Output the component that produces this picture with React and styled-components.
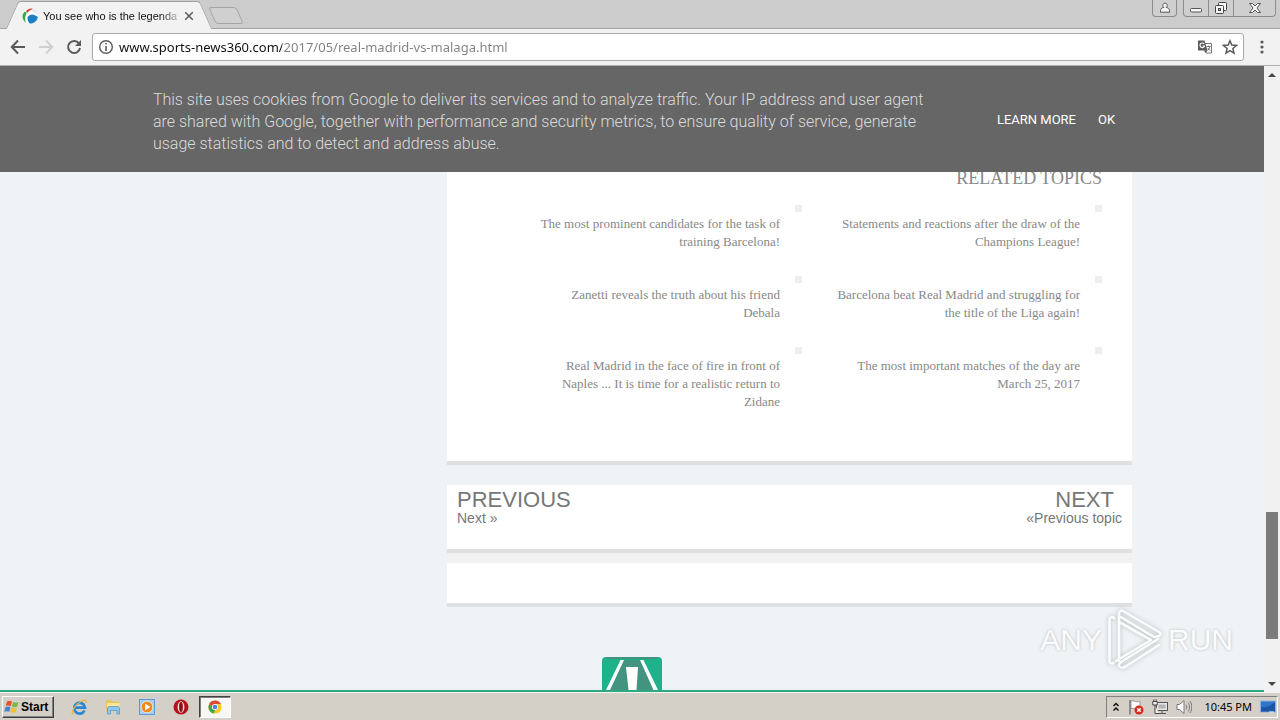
import React from 'react';
import styled, { createGlobalStyle } from 'styled-components';

const GlobalStyle = createGlobalStyle`
  * { box-sizing: border-box; }
  body { margin: 0; background: #eff3f6; }
  button { font: inherit; color: inherit; background: none; border: 0; padding: 0; }
  a { color: inherit; text-decoration: none; }
  svg { display: block; flex: none; }
`;

const Shell = styled.div`
  display: flex;
  flex-direction: column;
  min-height: 100vh;
  font-family: 'Noto Sans', sans-serif;
`;

/* ---------- browser chrome ---------- */
const TitleBar = styled.div`
  display: flex;
  height: 29px;
  padding-left: 12px;
  background: #cccccc;
  border-bottom: 1px solid #a5a5a5;
`;

const Tab = styled.div`
  position: relative;
  display: flex;
  align-items: center;
  gap: 5px;
  width: 194px;
  height: 29px;
  padding: 2px 12px 0 10px;
  &::before, &::after {
    content: '';
    position: absolute;
    top: 1px;
    bottom: 0;
    background: #f2f2f2;
    border-top: 1px solid #a0a0a0;
  }
  &::before {
    left: 0;
    right: 50%;
    border-left: 1px solid #a0a0a0;
    border-top-left-radius: 3px;
    transform: skewX(-24deg);
  }
  &::after {
    left: 40%;
    right: 0;
    border-right: 1px solid #a0a0a0;
    border-top-right-radius: 3px;
    transform: skewX(24deg);
  }
  & > * { position: relative; z-index: 1; }
`;

const TabTitle = styled.span`
  flex: 1;
  white-space: nowrap;
  font: 11px/16px 'Liberation Sans', sans-serif;
  color: #111;
  mask-image: linear-gradient(90deg, #000 86%, rgba(0, 0, 0, 0.2));
`;

const NewTab = styled.button`
  width: 28px;
  height: 17px;
  margin: 7px 0 0 6px;
  border: 1px solid #a5a5a5;
  border-radius: 3px;
  background: #d0d0d0;
  transform: skewX(24deg);
`;

const WindowControls = styled.div`
  display: flex;
  margin-left: auto;
  padding-right: 4px;
`;

const WindowButton = styled.button`
  display: flex;
  align-items: center;
  justify-content: center;
  width: ${p => p.$width}px;
  height: 17px;
  margin-right: ${p => p.$gap || 0}px;
  border: 1px solid #8c8c8c;
  border-top: 0;
  border-left-width: ${p => (p.$joined ? 0 : 1)}px;
  border-radius: ${p => p.$radius || 0};
  background: #cfcfcf;
`;

const Toolbar = styled.div`
  display: flex;
  align-items: center;
  gap: 8px;
  height: 37px;
  padding: 0 8px;
  background: #f2f2f2;
  border-bottom: 1px solid #b0b0b0;
`;

const IconButton = styled.button`
  display: flex;
  align-items: center;
  justify-content: center;
  width: 20px;
  height: 20px;
`;

const AddressBar = styled.div`
  display: flex;
  align-items: center;
  flex: 1;
  gap: 5px;
  height: 28px;
  padding: 0 3px 0 5px;
  background: #fff;
  border: 1px solid #a9a9a9;
  border-radius: 3px;
`;

const AddressInput = styled.input`
  flex: 1;
  min-width: 0;
  border: 0;
  outline: 0;
  padding: 0;
  font: 13px/20px 'Noto Sans', sans-serif;
  color: #222;
  background: linear-gradient(90deg, #111 163px, #808080 163px);
  background-clip: text;
  -webkit-text-fill-color: transparent;
`;

/* ---------- web page ---------- */
const Viewport = styled.div`
  display: flex;
  flex: 1;
`;

const Page = styled.div`
  position: relative;
  display: flex;
  flex-direction: column;
  flex: 1;
  min-width: 0;
  background: #eff3f6;
`;

const CookieBanner = styled.section`
  position: relative;
  z-index: 1;
  display: flex;
  justify-content: center;
  align-items: center;
  height: 106px;
  padding: 6px 0 0 4px;
  background: #666;
  font-family: Roboto, sans-serif;
`;

const CookieText = styled.p`
  width: 820px;
  margin: 0;
  font-size: 16px;
  line-height: 22px;
  font-weight: 300;
  color: #dcdcdc;
`;

const CookieLinks = styled.div`
  display: flex;
  gap: 22px;
  padding: 0 0 4px 24px;
  font-size: 13px;
  line-height: 18px;
  color: #fff;
`;

const Wrapper = styled.div`
  width: 100%;
  max-width: 1000px;
  margin: 0 auto;
`;

const Column = styled.main`
  width: 685px;
  max-width: 100%;
  margin-left: auto;
`;

const Card = styled.section`
  min-height: ${p => p.$height}px;
  padding: ${p => p.$padding || 0};
  margin-bottom: ${p => p.$gap || 0}px;
  background: #fff;
  border-bottom: 4px solid #dfe0e1;
`;

const PostNav = styled.div`
  background: #f1f1f1;
`;

const RelatedTitle = styled.h2`
  margin: 0 0 21px;
  font: 18px/12px 'Liberation Serif', serif;
  text-align: right;
  color: #888;
`;

const RelatedGrid = styled.ul`
  display: grid;
  grid-template-columns: 300px 300px;
  justify-content: end;
  row-gap: 25px;
  margin: 0;
  padding: 0;
  list-style: none;
`;

const RelatedItem = styled.li`
  display: flex;
  align-items: flex-start;
  justify-content: flex-end;
  gap: 15px;
  font: 13px/18px 'Liberation Serif', serif;
  text-align: right;
  color: #888;
  a { padding-top: 10px; }
`;

const Bullet = styled.span`
  flex: none;
  width: 7px;
  height: 7px;
  background: #eeeeee;
`;

const NavRow = styled.nav`
  display: flex;
  justify-content: space-between;
  font-family: 'Liberation Sans', sans-serif;
  color: #777;
`;

const NavLink = styled.a`
  display: flex;
  flex-direction: column;
  align-items: ${p => (p.$end ? 'flex-end' : 'flex-start')};
  font-size: 14px;
  line-height: 16px;
  strong {
    padding-right: ${p => (p.$end ? 8 : 0)}px;
    font-size: 22px;
    line-height: 20px;
    font-weight: 400;
  }
`;

const PageFooter = styled.footer`
  display: flex;
  justify-content: center;
  margin-top: auto;
  border-bottom: 2px solid #2fa884;
`;

const Watermark = styled.div`
  position: absolute;
  right: 31px;
  bottom: 20px;
  display: flex;
  align-items: center;
  gap: 5px;
  font: 30px/64px 'Liberation Sans', sans-serif;
  color: #fbfcfc;
  text-shadow: 0 0 3px #b4b8ba;
  svg { filter: drop-shadow(0 0 2px #b4b8ba); }
`;

const Scrollbar = styled.div`
  display: flex;
  flex-direction: column;
  width: 16px;
  background: #f1f1f1;
`;

const ScrollButton = styled.button`
  display: flex;
  align-items: center;
  justify-content: center;
  height: 17px;
`;

const ScrollTrack = styled.div`
  display: grid;
  grid-template-rows: 429fr 127fr 36fr;
  flex: 1;
  padding: 0 2px;
`;

const ScrollThumb = styled.div`
  grid-row: 2;
  background: #7b7b7b;
`;

/* ---------- taskbar ---------- */
const Taskbar = styled.div`
  display: flex;
  align-items: center;
  height: 28px;
  padding: 1px 2px 0;
  background: #d4d0c8;
  border-top: 1px solid #f4f3f0;
`;

const StartButton = styled.button`
  display: flex;
  align-items: center;
  gap: 1px;
  width: 52px;
  height: 22px;
  margin-right: 8px;
  padding-left: 1px;
  border: 1px solid;
  border-color: #fff #404040 #404040 #fff;
  box-shadow: inset -1px -1px #808080;
  font: bold 12px/18px 'Liberation Sans', sans-serif;
  color: #000;
`;

const TaskButton = styled.button`
  display: flex;
  align-items: center;
  justify-content: center;
  width: ${p => (p.$active ? 32 : 34)}px;
  height: 22px;
  margin-left: ${p => (p.$active ? 1 : 0)}px;
  ${p => p.$active && `
    background: #f8f7f5;
    border: 1px solid;
    border-color: #404040 #fff #fff #404040;
    box-shadow: inset 1px 1px #808080;
  `}
`;

const Tray = styled.div`
  display: flex;
  align-items: center;
  gap: 8px;
  height: 22px;
  margin-left: auto;
  padding: 0 1px 0 5px;
  border: 1px solid;
  border-color: #808080 #fff #fff #808080;
`;

const Clock = styled.time`
  margin-left: 4px;
  font: 11px/16px 'Noto Sans', sans-serif;
  color: #000;
`;

/* ---------- drawings ---------- */
const Favicon = () => (
  <svg width="16" height="16" viewBox="0 0 16 16">
    <circle cx="8" cy="8" r="7.5" fill="#fff" />
    <path d="M4 3.200C6 .8 8.500 0 11 .9 9 1.400 6.500 2.800 5.200 4.800z" fill="#d33c2c" />
    <path d="M3 3.500C-.3 6 -.5 11.500 3.800 14.800c-1-3.500-.8-6.500 1-10z" fill="#3fa648" />
    <path d="M5.500 9C8 5.500 12 5.500 15.800 9c-.6 4-4 6.800-8 6.600C6 13.800 5.200 11.500 5.500 9z" fill="#1c7ec4" />
    <path d="M11 .9c2.600.9 4.400 3 4.800 5.600-1.600-1.800-3.400-2.800-5.600-3z" fill="#dfe3e6" />
  </svg>
);

const Stroke = ({ size = 16, color = '#5a5a5a', width = 2, d }) => (
  <svg width={size} height={size} viewBox="0 0 16 16" fill="none" stroke={color} strokeWidth={width}>
    <path d={d} />
  </svg>
);

const Reload = () => (
  <svg width="16" height="16" viewBox="0 0 16 16">
    <path d="M13 4.500A6 6 0 1 0 14 9" fill="none" stroke="#5a5a5a" strokeWidth="2" />
    <path d="M15 1v6H9z" fill="#5a5a5a" />
  </svg>
);

const Info = () => (
  <svg width="16" height="16" viewBox="0 0 16 16">
    <circle cx="8" cy="8" r="6.300" fill="none" stroke="#5a5a5a" strokeWidth="1.400" />
    <path d="M7.200 4h1.600v1.600H7.200zM7.200 7h1.600v5H7.200z" fill="#5a5a5a" />
  </svg>
);

const Translate = () => (
  <svg width="16" height="16" viewBox="0 0 16 16">
    <path d="M6.500 4.500h8v9.500H9" fill="#fff" stroke="#777" />
    <path d="M1 1.500h6.500l3 10H1z" fill="#5a5a5a" />
    <path d="M7.200 5A2.300 2.300 0 1 0 7.500 7H5.500" fill="none" stroke="#fff" strokeWidth="1.100" />
    <path d="M9.500 7.500h4M11.500 6.500v1M13 7.500c-.4 1.600-1.200 2.800-2.500 3.800M10.800 9l2.400 2.600" fill="none" stroke="#666" strokeWidth=".9" />
    <path d="M7 11.500h3.500L8.500 14z" fill="#444" />
  </svg>
);

const Star = () => (
  <svg width="16" height="16" viewBox="0 0 16 16">
    <path d="M8 1.800l1.800 4.300 4.700.4-3.600 3 1.100 4.600L8 11.700 4 14.100l1.100-4.600-3.600-3 4.700-.4z" fill="none" stroke="#5a5a5a" strokeWidth="1.500" />
  </svg>
);

const Dots = () => (
  <svg width="16" height="16" viewBox="0 0 16 16" fill="#5a5a5a">
    <circle cx="8" cy="3" r="1.600" /><circle cx="8" cy="8" r="1.600" /><circle cx="8" cy="13" r="1.600" />
  </svg>
);

const Person = () => (
  <svg width="12" height="12" viewBox="0 0 12 12" fill="#f4f4f4" stroke="#555">
    <path d="M6 1.200c1.300 0 2.200 1 2.200 2.200 0 .9-.4 1.600-1 2 2 .4 3.300 1.500 3.300 3v1.800h-9V8.400c0-1.500 1.300-2.600 3.300-3-.6-.4-1-1.100-1-2 0-1.200.9-2.200 2.200-2.200z" />
  </svg>
);

const Minimize = () => (
  <svg width="14" height="12" viewBox="0 0 14 12">
    <rect x="1.500" y="6.500" width="11" height="3.500" rx="1" fill="#f6f6f6" stroke="#555" />
  </svg>
);

const Restore = () => (
  <svg width="14" height="14" viewBox="0 0 14 14" fill="#f6f6f6" stroke="#444">
    <rect x="4.500" y="1.500" width="8" height="8" rx="1" />
    <rect x="1.500" y="4.500" width="8" height="8" rx="1" />
    <rect x="4.500" y="7.500" width="2" height="2" fill="#ccc" />
  </svg>
);

const CloseGlyph = () => (
  <svg width="14" height="12" viewBox="0 0 14 12">
    <path d="M1.500 1.500h3L7 4l2.500-2.500h3L9 6l3.500 4.500h-3L7 8l-2.500 2.500h-3L5 6z" fill="#f6f6f6" stroke="#555" />
  </svg>
);

const Arrow = ({ down }) => (
  <svg width="8" height="4" viewBox="0 0 8 4">
    <path d={down ? 'M0 0h8L4 4z' : 'M0 4h8L4 0z'} fill="#484848" />
  </svg>
);

const Road = () => (
  <svg width="60" height="33" viewBox="0 0 60 33">
    <path d="M0 33V4a4 4 0 0 1 4-4h52a4 4 0 0 1 4 4v29z" fill="#1eb28c" />
    <path d="M22 3h17l16 30H5z" fill="#429480" />
    <path d="M4 1h52" stroke="#429480" strokeWidth="2" />
    <path d="M18.500 3h3.500L8 33H4zM38 3h3.500L56 33h-4.500zM24 10h12l-1.500 23h-8z" fill="#fff" />
  </svg>
);

const PlayMark = () => (
  <svg width="56" height="62" viewBox="0 0 56 62" fill="none" stroke="#fbfcfc" strokeWidth="2.6" strokeLinejoin="round" strokeLinecap="round">
    <path d="M7 9C5 7 2.500 8 2.500 11v41c0 2 2 3 4 2" />
    <path d="M12 52V5c0-3 2-4 4-3l36 21c2 1 2 3 0 4l-5 1L12 7" />
    <path d="M12 13l32 18-35 21" />
    <path d="M51 30L17 51c-3 2-6 3-5 6 1 2 4 2 6 1l34-22" />
  </svg>
);

const WinFlag = () => (
  <svg width="16" height="16" viewBox="0 0 16 16">
    <path d="M3 2.500c2-1 3.500-.8 5 .1L6.800 7.200C5.200 6.400 3.700 6.300 1.800 7z" fill="#e5512b" />
    <path d="M9 3c1.800.9 3.500.9 5.500 0l-1.300 4.600c-1.800.8-3.500.7-5.300-.2z" fill="#79b648" />
    <path d="M1.500 8c1.800-.8 3.500-.7 5 .2l-1.200 4.600c-1.600-.8-3.200-.8-5 0z" fill="#3f86d0" />
    <path d="M7.600 8.500c1.700.9 3.500 1 5.300.2l-1.200 4.600c-1.900.8-3.600.7-5.300-.2z" fill="#f6bd34" />
  </svg>
);

const IeIcon = () => (
  <svg width="17" height="17" viewBox="0 0 17 17" fill="none">
    <path d="M13.500 11.500A5.400 5.400 0 1 1 14 8.700H4.500" stroke="#2b86d6" strokeWidth="2.800" />
    <path d="M2 15.500C-.5 13 4.500 5.500 10 2.500c3.500-2 6-1.600 5.300 1.300" stroke="#e9b93a" strokeWidth="1.300" />
  </svg>
);

const FolderIcon = () => (
  <svg width="16" height="16" viewBox="0 0 16 16">
    <path d="M1 1h5l1 1.500h7V12H1z" fill="#e8c45a" />
    <path d="M2 4h12.500v7H2z" fill="#f9e795" />
    <path d="M2.500 15V9.500c0-1.500 1-2 2-2h7.500c1.500 0 2.500.6 2.500 2V15H12v-3.500H5.500V15z" fill="#8cc6ee" stroke="#4c93c5" strokeWidth=".7" />
  </svg>
);

const MediaIcon = () => (
  <svg width="16" height="16" viewBox="0 0 16 16">
    <rect x=".5" y=".5" width="15" height="15" fill="#a9cdf0" stroke="#5b9bd5" />
    <circle cx="8" cy="8" r="5.800" fill="#f08a1c" stroke="#fff" strokeWidth=".6" />
    <path d="M6.200 4.800v6.400L11.500 8z" fill="#fff" />
  </svg>
);

const OperaIcon = () => (
  <svg width="16" height="16" viewBox="0 0 16 16">
    <circle cx="8" cy="8" r="7.500" fill="#b5121b" />
    <ellipse cx="8" cy="8" rx="3.400" ry="5.800" fill="#f4e4e4" />
    <ellipse cx="8" cy="8" rx="1.900" ry="5" fill="#8f0d14" />
  </svg>
);

const ChromeIcon = () => (
  <svg width="14" height="14" viewBox="0 0 16 16">
    <circle cx="8" cy="8" r="7.500" fill="#f6c927" />
    <path d="M1.500 4.200A7.500 7.500 0 0 1 14.700 4.600H8L4.900 9.500z" fill="#df4a38" />
    <path d="M1.500 4.200 4.900 9.800 8 11.500l-1.500 3.900A7.500 7.500 0 0 1 1.500 4.200z" fill="#3fa652" />
    <circle cx="8" cy="8" r="3.500" fill="#fff" />
    <circle cx="8" cy="8" r="2.700" fill="#4a86e0" />
  </svg>
);

const Chevrons = () => (
  <svg width="8" height="10" viewBox="0 0 8 10" fill="none" stroke="#111" strokeWidth="1.500">
    <path d="M1.500 4L4 1.500 6.500 4M1.500 8.500L4 6l2.500 2.500" />
  </svg>
);

const FlagIcon = () => (
  <svg width="16" height="16" viewBox="0 0 16 16">
    <path d="M2 1v14.500" stroke="#777" strokeWidth="1.500" />
    <path d="M3 2c3-1 4 1.500 9 .5v7C8 10.500 6 8.500 3 9.500z" fill="#fff" stroke="#888" strokeWidth=".8" />
    <circle cx="11" cy="11" r="4.500" fill="#d8281e" />
    <path d="M9.200 9.200l3.600 3.600M12.800 9.200l-3.600 3.600" stroke="#fff" strokeWidth="1.400" />
  </svg>
);

const NetworkIcon = () => (
  <svg width="16" height="16" viewBox="0 0 16 16">
    <rect x="4.500" y="3.500" width="11" height="8" fill="#e4e4e4" stroke="#555" />
    <rect x="6.500" y="5.500" width="7" height="4" fill="#b5b5b5" />
    <path d="M7 14.500h7M10 12v2" stroke="#555" />
    <path d="M.8 2.500h4.400V6H.8zM1.800.5v2M4.200.5v2M3 6v8.500h4" fill="#f2f2f2" stroke="#444" />
  </svg>
);

const SpeakerIcon = () => (
  <svg width="16" height="16" viewBox="0 0 16 16" fill="none" stroke="#777">
    <path d="M1 5.500h2.500L8 1.500v13l-4.500-4H1z" fill="#fff" />
    <path d="M10 5.500c1 1.500 1 3.500 0 5M12 3.500c2 2.700 2 6.300 0 9M14 2c2.300 3.500 2.300 8.500 0 12" />
  </svg>
);

const DesktopIcon = () => (
  <svg width="16" height="16" viewBox="0 0 16 16">
    <rect x=".5" y="2" width="15" height="11" fill="#2f74c8" stroke="#8fb3de" />
    <path d="M1 8c5 1 9-1 14-5v9.500H1z" fill="#1c57a6" />
    <path d="M9 13h5" stroke="#e7eef7" />
  </svg>
);

const related = [
  ['The most prominent candidates for the task of', 'training Barcelona!'],
  ['Statements and reactions after the draw of the', 'Champions League!'],
  ['Zanetti reveals the truth about his friend', 'Debala'],
  ['Barcelona beat Real Madrid and struggling for', 'the title of the Liga again!'],
  ['Real Madrid in the face of fire in front of', 'Naples ... It is time for a realistic return to', 'Zidane'],
  ['The most important matches of the day are', 'March 25, 2017'],
];

const Lines = ({ lines }) => lines.map((line, i) => (
  <React.Fragment key={line}>{i > 0 && <br />}{line}</React.Fragment>
));

export default function App() {
  return (
    <Shell>
      <GlobalStyle />
      <TitleBar>
        <Tab>
          <Favicon />
          <TabTitle>You see who is the legenda</TabTitle>
          <button aria-label="Close tab"><Stroke size={10} width={2.4} d="M2 2l12 12M14 2L2 14" /></button>
        </Tab>
        <NewTab aria-label="New tab" />
        <WindowControls>
          <WindowButton aria-label="Profile" $width={25} $gap={6} $radius="0 0 4px 4px"><Person /></WindowButton>
          <WindowButton aria-label="Minimize" $width={26} $radius="0 0 0 4px"><Minimize /></WindowButton>
          <WindowButton aria-label="Restore" $width={25} $joined><Restore /></WindowButton>
          <WindowButton aria-label="Close" $width={42} $joined $radius="0 0 4px 0"><CloseGlyph /></WindowButton>
        </WindowControls>
      </TitleBar>
      <Toolbar>
        <IconButton aria-label="Back"><Stroke d="M15 8H2M8 1.500L1.800 8 8 14.500" /></IconButton>
        <IconButton aria-label="Forward"><Stroke color="#d0d0d0" d="M1 8h13M8 1.500L14.200 8 8 14.500" /></IconButton>
        <IconButton aria-label="Reload"><Reload /></IconButton>
        <AddressBar>
          <Info />
          <AddressInput aria-label="Address" defaultValue="www.sports-news360.com/2017/05/real-madrid-vs-malaga.html" />
          <IconButton aria-label="Translate"><Translate /></IconButton>
          <IconButton aria-label="Bookmark"><Star /></IconButton>
        </AddressBar>
        <IconButton aria-label="Menu"><Dots /></IconButton>
      </Toolbar>

      <Viewport>
        <Page>
          <CookieBanner>
            <CookieText>
              <Lines lines={[
                'This site uses cookies from Google to deliver its services and to analyze traffic. Your IP address and user agent',
                'are shared with Google, together with performance and security metrics, to ensure quality of service, generate',
                'usage statistics and to detect and address abuse.',
              ]} />
            </CookieText>
            <CookieLinks>
              <a href="#learn">LEARN MORE</a>
              <a href="#ok">OK</a>
            </CookieLinks>
          </CookieBanner>
          <Wrapper>
            <Column>
              <Card $height={293} $gap={20} $padding="0 30px 0 0">
                <RelatedTitle>RELATED TOPICS</RelatedTitle>
                <RelatedGrid>
                  {related.map(lines => (
                    <RelatedItem key={lines[0]}>
                      <a href="#topic"><Lines lines={lines} /></a>
                      <Bullet />
                    </RelatedItem>
                  ))}
                </RelatedGrid>
              </Card>
              <PostNav>
                <Card $height={68} $gap={10} $padding="5px 10px 0">
                  <NavRow>
                    <NavLink href="#previous"><strong>PREVIOUS</strong>Next »</NavLink>
                    <NavLink href="#next" $end><strong>NEXT</strong>«Previous topic</NavLink>
                  </NavRow>
                </Card>
                <Card $height={44} />
              </PostNav>
            </Column>
          </Wrapper>
          <PageFooter><Road /></PageFooter>
          <Watermark>
            <span>ANY</span><PlayMark /><span>RUN</span>
          </Watermark>
        </Page>
        <Scrollbar>
          <ScrollButton aria-label="Scroll up"><Arrow /></ScrollButton>
          <ScrollTrack><ScrollThumb /></ScrollTrack>
          <ScrollButton aria-label="Scroll down"><Arrow down /></ScrollButton>
        </Scrollbar>
      </Viewport>

      <Taskbar>
        <StartButton><WinFlag />Start</StartButton>
        <TaskButton aria-label="Internet Explorer"><IeIcon /></TaskButton>
        <TaskButton aria-label="Explorer"><FolderIcon /></TaskButton>
        <TaskButton aria-label="Media Player"><MediaIcon /></TaskButton>
        <TaskButton aria-label="Opera"><OperaIcon /></TaskButton>
        <TaskButton aria-label="Chrome" $active><ChromeIcon /></TaskButton>
        <Tray>
          <Chevrons />
          <FlagIcon />
          <NetworkIcon />
          <SpeakerIcon />
          <Clock>10:45 PM</Clock>
          <DesktopIcon />
        </Tray>
      </Taskbar>
    </Shell>
  );
}
